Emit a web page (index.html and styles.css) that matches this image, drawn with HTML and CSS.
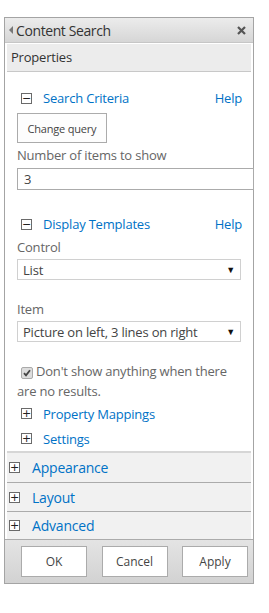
FILE: index.html
```html
<!DOCTYPE html>
<html lang="en">
<head>
    <meta charset="UTF-8">
    <meta name="viewport" content="width=device-width, initial-scale=1.0">
    <title>Content Search - Web Part Properties</title>
    <link rel="stylesheet" href="styles.css">
</head>
<body>

    <!-- Tool pane -->
    <div class="toolpane">
        <div class="toolpane-header">
            <span class="collapse-arrow"></span>
            <span class="toolpane-title">Content Search</span>
            <svg class="close-btn" width="9" height="9" viewBox="0 0 9 9"><path d="M1 1 L8 8 M8 1 L1 8" stroke="#555" stroke-width="2.2"/></svg>
        </div>

        <div class="toolpane-body">
            <div class="props-title">Properties</div>

            <!-- Search Criteria -->
            <div class="group">
                <div class="group-head">
                    <span class="toggle">&minus;</span>
                    <a href="#" class="group-link">Search Criteria</a>
                    <a href="#" class="help-link">Help</a>
                </div>
                <button class="btn-query">Change query</button>
                <label class="field-label" for="item-count">Number of items to show</label>
                <input type="text" id="item-count" class="text-input" value="3">
            </div>

            <!-- Display Templates -->
            <div class="group group-templates">
                <div class="group-head">
                    <span class="toggle">&minus;</span>
                    <a href="#" class="group-link">Display Templates</a>
                    <a href="#" class="help-link">Help</a>
                </div>
                <label class="field-label">Control</label>
                <div class="select-box">List<span class="caret">&#9660;</span></div>
                <label class="field-label label-item">Item</label>
                <div class="select-box">Picture on left, 3 lines on right<span class="caret">&#9660;</span></div>

                <div class="check-row">
                    <span class="checkbox"><svg width="8" height="8" viewBox="0 0 8 8"><path d="M1 4.2 L3 6.4 L7 1.2" fill="none" stroke="#444" stroke-width="1.8"/></svg></span>Don't show anything when there are no results.
                </div>

                <div class="sub-head">
                    <span class="toggle">+</span>
                    <a href="#" class="group-link">Property Mappings</a>
                </div>
                <div class="sub-head">
                    <span class="toggle">+</span>
                    <a href="#" class="group-link">Settings</a>
                </div>
            </div>

            <!-- Collapsed categories -->
            <div class="category first"><span class="toggle">+</span><a href="#">Appearance</a></div>
            <div class="category"><span class="toggle">+</span><a href="#">Layout</a></div>
            <div class="category last"><span class="toggle">+</span><a href="#">Advanced</a></div>
        </div>

        <div class="toolpane-footer">
            <button class="btn-footer">OK</button>
            <button class="btn-footer">Cancel</button>
            <button class="btn-footer">Apply</button>
        </div>
    </div>

</body>
</html>
```

FILE: styles.css
```css
* {
    margin: 0;
    padding: 0;
    box-sizing: border-box;
}

body {
    font-family: "Open Sans", "Noto Sans", sans-serif;
    font-size: 13px;
    letter-spacing: -0.2px;
    background-color: #fff;
    color: #444;
}

a {
    color: #0072c6; /* SharePoint blue */
    text-decoration: none;
}

/* Tool pane frame */
.toolpane {
    width: 250px;
    margin: 17px 0 0 4px;
    border: 1px solid #a4a4a4;
    background-color: #fff;
}

.toolpane-header {
    display: flex;
    align-items: center;
    height: 25px;
    padding: 0 7px 0 4px;
    background: linear-gradient(#ececec, #d6d6d6);
    border-bottom: 1px solid #c6c6c6;
}

.collapse-arrow {
    width: 0;
    height: 0;
    border-top: 4px solid transparent;
    border-bottom: 4px solid transparent;
    border-right: 4px solid #777;
    margin-right: 3px;
}

.toolpane-title {
    flex: 1;
    font-size: 14px;
    color: #333;
    letter-spacing: -0.4px;
}

.close-btn {
    flex: none;
}

.toolpane-body {
    padding: 1px 2px 0 2px;
}

.props-title {
    height: 28px;
    line-height: 27px;
    padding-left: 4px;
    background-color: #ececec;
    border-bottom: 1px solid #c8c8c8;
    font-size: 13px;
    color: #333;
}

/* Expandable groups */
.group {
    padding: 14px 0 0 10px;
}

.group-head {
    display: flex;
    align-items: center;
    height: 24px;
    padding-left: 4px;
    padding-right: 9px;
}

.group-link {
    flex: 1;
    font-size: 13px;
}

.help-link {
    font-size: 13px;
}

.toggle {
    display: inline-flex;
    align-items: center;
    justify-content: center;
    flex: none;
    width: 11px;
    height: 11px;
    border: 1px solid #6a6a6a;
    background-color: #fff;
    font-size: 11px;
    line-height: 1;
    color: #222;
    font-family: "DejaVu Sans", sans-serif;
    letter-spacing: 0;
    margin-right: 11px;
}

.btn-query {
    display: block;
    width: 90px;
    height: 30px;
    margin-top: 3px;
    background-color: #fdfdfd;
    border: 1px solid #ababab;
    font-family: inherit;
    font-size: 11px;
    letter-spacing: -0.2px;
    color: #444;
}

.field-label {
    display: block;
    height: 22px;
    line-height: 22px;
    margin-top: 1px;
    color: #666;
}

.text-input {
    display: block;
    width: 237px;
    height: 22px;
    margin-top: 2px;
    padding: 0 6px;
    border: 1px solid #ababab;
    font-family: inherit;
    font-size: 13px;
    color: #444;
}

.group-templates {
    padding-top: 22px;
}

.group-templates .field-label {
    height: 20px;
    line-height: 20px;
}

.select-box {
    display: flex;
    align-items: center;
    justify-content: space-between;
    width: 224px;
    height: 21px;
    margin-top: 2px;
    padding: 0 5px 0 5px;
    border: 1px solid #d0d0d0;
    color: #444;
}

.caret {
    font-size: 9px;
    color: #111;
}

.group-templates .label-item {
    margin-top: 19px;
}

.check-row {
    margin-top: 19px;
    line-height: 20px;
    padding-right: 12px;
    color: #666;
}

.checkbox {
    display: inline-flex;
    align-items: center;
    justify-content: center;
    width: 12px;
    height: 12px;
    margin: 0 3px 0 4px;
    vertical-align: -1px;
    background-color: #ddd;
    border: 1px solid #aaa;
    border-radius: 2px;
}

.sub-head {
    display: flex;
    align-items: center;
    height: 25px;
    padding-left: 4px;
}

/* Collapsed categories */
.category {
    display: flex;
    align-items: center;
    height: 29px;
    padding-left: 2px;
    background-color: #f1f1f1;
    border-top: 1px solid #ababab;
    font-size: 14px;
}

.category.first {
    height: 31px;
    border-top: 2px solid #d6d6d6;
}

.category.last {
    height: 28px;
}

.category .toggle {
    margin-right: 12px;
}

/* Footer buttons */
.toolpane-footer {
    display: flex;
    justify-content: space-between;
    padding: 6px 5px 6px 16px;
    background: linear-gradient(#e4e4e4, #d2d2d2);
    border-top: 1px solid #ababab;
}

.btn-footer {
    width: 66px;
    height: 31px;
    background-color: #fff;
    border: 1px solid #ababab;
    font-family: inherit;
    font-size: 12px;
    color: #444;
}
```
